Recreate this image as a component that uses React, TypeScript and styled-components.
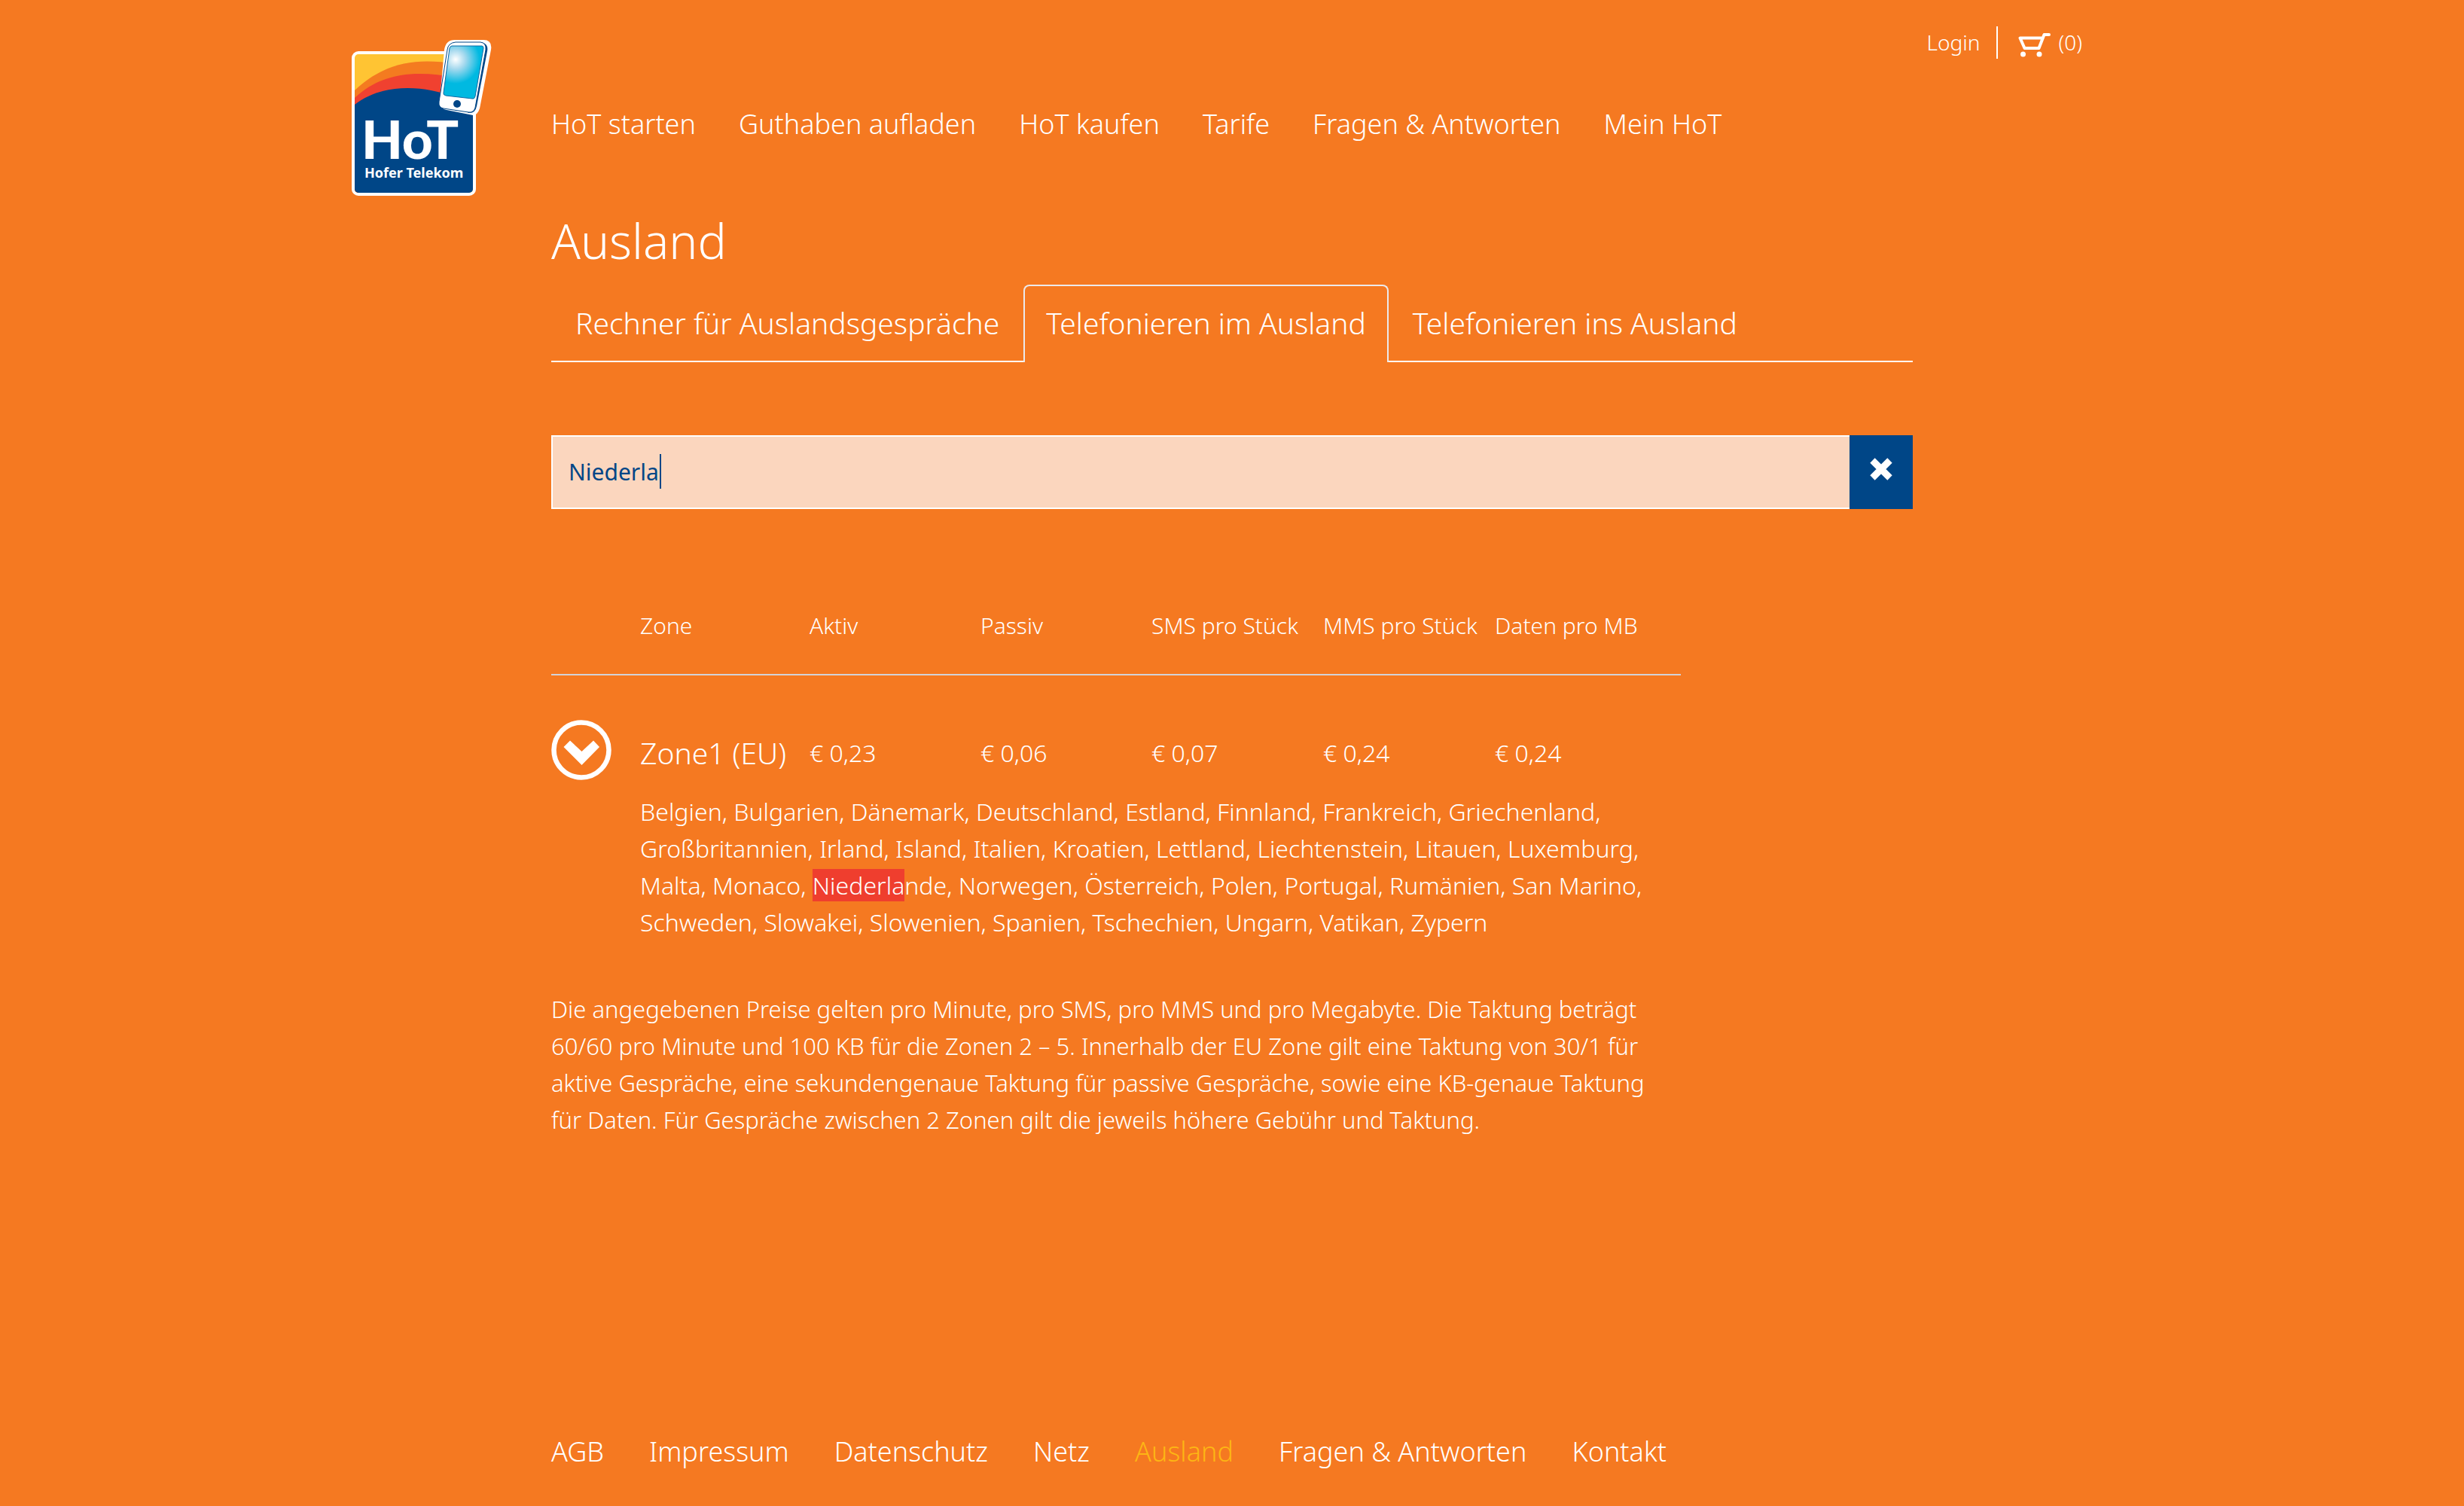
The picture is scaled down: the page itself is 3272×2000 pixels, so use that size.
import React, { useState } from "react";
import styled, { createGlobalStyle } from "styled-components";

const orange = "#f57921";
const navy = "#004687";
const red = "#ef3e2e";
const yellow = "#fdb614";

const GlobalStyle = createGlobalStyle`
  *, *::before, *::after { box-sizing: border-box; }
  body {
    margin: 0;
    background: ${orange};
    color: #fff;
    font-family: "Noto Sans", "Open Sans", sans-serif;
    font-weight: 300;
  }
`;

const Shell = styled.div`
  display: grid;
  grid-template-columns: 265px minmax(0, 1fr);
  max-width: 2338px;
  min-height: 100vh;
  margin: 0 auto;
`;

const LogoLink = styled.a`
  display: block;
  align-self: start;
  padding-top: 52px;

  svg {
    display: block;
    width: 186px;
    height: 210px;
  }
`;

const Column = styled.div`
  display: flex;
  flex-direction: column;
`;

const Utility = styled.div`
  display: flex;
  justify-content: flex-end;
  align-items: center;
  height: 43px;
  margin-top: 35px;
  padding-right: 40px;
  font-size: 28px;
  line-height: 43px;
`;

const UtilityLink = styled.a`
  display: flex;
  align-items: center;
  gap: 10px;
  color: inherit;
  text-decoration: none;

  svg {
    margin-top: 6px;
  }
`;

const Divider = styled.span`
  width: 2px;
  height: 43px;
  margin: 0 27px 0 22px;
  background: #fff;
`;

const LinkBar = styled.nav<{ $gap: number }>`
  display: flex;
  flex-wrap: wrap;
  column-gap: ${(p) => p.$gap}px;
  font-size: 36px;
  line-height: 48px;
`;

const MainNav = styled(LinkBar)`
  margin-top: 63px;
`;

const FooterNav = styled(LinkBar)`
  padding-bottom: 48px;
`;

const NavLink = styled.a<{ $current?: boolean }>`
  color: ${(p) => (p.$current ? yellow : "inherit")};
  text-decoration: none;
`;

const Main = styled.main`
  flex: 1;
  max-width: 1808px;
  padding-bottom: 96px;
`;

const Title = styled.h1`
  margin: 91px 0 18px;
  font-size: 64px;
  font-weight: 300;
  line-height: 80px;
`;

const Tabs = styled.div`
  display: flex;

  &::after {
    content: "";
    flex: 1;
    border-bottom: 2px solid #fff;
  }
`;

const Tab = styled.button<{ $active: boolean }>`
  padding: 27px 32px 26px;
  border: 0;
  border-bottom: 2px solid #fff;
  border-radius: 0;
  background: none;
  color: inherit;
  font: inherit;
  font-size: 39px;
  line-height: 48px;
  cursor: pointer;
  ${(p) =>
    p.$active &&
    `
    padding: 25px 28px 28px;
    border: 2px solid #ece9ea;
    border-bottom: 0;
    border-radius: 8px 8px 0 0;
  `}
`;

const Search = styled.form`
  display: flex;
  position: relative;
  height: 98px;
  margin-top: 97px;
`;

const SearchInput = styled.input`
  flex: 1;
  min-width: 0;
  padding: 0 21px 2px;
  border: 2px solid #fff;
  border-right: 0;
  border-radius: 0;
  outline: 0;
  background: #fbd6be;
  color: ${navy};
  font: inherit;
  font-size: 30px;
  font-weight: 400;
  caret-color: transparent;
`;

const Caret = styled.span`
  position: absolute;
  top: 25px;
  left: 144px;
  width: 2px;
  height: 46px;
  background: ${navy};
`;

const ClearButton = styled.button`
  display: flex;
  justify-content: center;
  align-items: center;
  width: 84px;
  padding: 0 0 8px;
  border: 0;
  background: ${navy};
  cursor: pointer;
`;

const Rates = styled.table`
  width: 100%;
  max-width: 1500px;
  margin-top: 131px;
  border-spacing: 0;
  table-layout: fixed;
  text-align: left;
  white-space: nowrap;
`;

const Col = styled.col<{ $width?: number }>`
  width: ${(p) => (p.$width ? `${p.$width}px` : "auto")};
`;

const HeadCell = styled.th`
  padding: 0 0 40px;
  border-bottom: 2px solid #d2d2d8;
  font-size: 30px;
  font-weight: 300;
  line-height: 48px;
`;

const IconCell = styled.td`
  padding: 59px 0 0;
`;

const ZoneName = styled.th`
  padding: 67px 0 0;
  font-size: 39px;
  font-weight: 300;
  line-height: 48px;
`;

const Price = styled.td`
  padding: 67px 0 0;
  font-size: 32px;
  line-height: 48px;
`;

const Toggle = styled.button`
  display: block;
  width: 80px;
  height: 80px;
  padding: 0;
  border: 0;
  background: none;
  cursor: pointer;
`;

const Countries = styled.td`
  padding: 17px 0 0;
  font-size: 32px;
  line-height: 49px;
  white-space: normal;
`;

const Mark = styled.mark`
  background: ${red};
  color: inherit;
`;

const Note = styled.p`
  max-width: 1484px;
  margin: 67px 0 0;
  font-size: 31px;
  line-height: 49px;
`;

function Logo() {
  return (
    <svg viewBox="0 0 186 210" role="img" aria-label="HoT Hofer Telekom">
      <defs>
        <clipPath id="card">
          <rect x="4" y="20" width="157" height="184" rx="5" />
        </clipPath>
        <radialGradient id="screen" gradientUnits="userSpaceOnUse" cx="138" cy="27" r="32">
          <stop offset="0" stopColor="#fff" />
          <stop offset="0.4" stopColor="#a6d9ee" />
          <stop offset="1" stopColor="#00b9e1" />
        </radialGradient>
      </defs>
      <rect x="0" y="16" width="165" height="192" rx="9" fill="#fff" />
      <g clipPath="url(#card)">
        <rect x="4" y="20" width="158" height="185" fill="#ffc433" />
        <path d="M4 68C42 32 84 24 138 33V205H4Z" fill="#f47b20" />
        <path d="M4 78C40 44 86 41 138 51V205H4Z" fill="#f04130" />
        <path d="M4 87C40 59 92 60 138 77H162V205H4Z" fill={navy} />
      </g>
      <path
        d="M137 1H175Q187 1 185 14L170 92Q167 101 161 101L126 94Q116 92 117 81L123 14Q125 1 137 1Z"
        fill="#fff"
      />
      <path d="M172 4Q182 6 180 16L166 89Q164 99 155 98L150 94Z" fill={navy} />
      <path
        d="M138 4H171Q179 5 178 14L164 91Q162 98 155 97L122 92Q115 91 116 83L127 14Q128 5 138 4Z"
        fill="#fff"
        stroke={navy}
        strokeWidth="1"
      />
      <path
        d="M133 9H173Q175 9 175 12L164 76Q163 80 160 79L125 75Q121 74 122 71L130 12Q131 9 133 9Z"
        fill="url(#screen)"
        stroke="#0d6aa6"
        strokeWidth="1"
      />
      <circle cx="140" cy="86" r="5" fill={navy} />
      <g fill="#fff">
        <text x="13" y="159" fontFamily="Lato, sans-serif" fontSize="71" fontWeight="900">HoT</text>
        <text x="17" y="184" fontFamily='"Noto Sans", sans-serif' fontSize="18" fontWeight="700">Hofer Telekom</text>
      </g>
    </svg>
  );
}

function CartIcon() {
  return (
    <svg width="43" height="33" viewBox="0 0 43 33" aria-hidden="true">
      <path
        d="M41 3H34.500L27.500 21H8.500L2.500 7.500H32"
        fill="none"
        stroke="#fff"
        strokeWidth="4"
        strokeLinecap="round"
        strokeLinejoin="round"
      />
      <circle cx="6.500" cy="29" r="3.500" fill="#fff" />
      <circle cx="28" cy="29" r="3.500" fill="#fff" />
    </svg>
  );
}

const mainLinks = ["HoT starten", "Guthaben aufladen", "HoT kaufen", "Tarife", "Fragen & Antworten", "Mein HoT"];
const footerLinks = ["AGB", "Impressum", "Datenschutz", "Netz", "Ausland", "Fragen & Antworten", "Kontakt"];
const tabs = ["Rechner für Auslandsgespräche", "Telefonieren im Ausland", "Telefonieren ins Ausland"];
const headings = ["Zone", "Aktiv", "Passiv", "SMS pro Stück", "MMS pro Stück", "Daten pro MB"];
const prices = ["€ 0,23", "€ 0,06", "€ 0,07", "€ 0,24", "€ 0,24"];
const countries =
  "Belgien, Bulgarien, Dänemark, Deutschland, Estland, Finnland, Frankreich, Griechenland, Großbritannien, Irland, Island, Italien, Kroatien, Lettland, Liechtenstein, Litauen, Luxemburg, Malta, Monaco, Niederlande, Norwegen, Österreich, Polen, Portugal, Rumänien, San Marino, Schweden, Slowakei, Slowenien, Spanien, Tschechien, Ungarn, Vatikan, Zypern";

function Highlighted({ text, query }: { text: string; query: string }) {
  const at = query ? text.indexOf(query) : -1;
  if (at < 0) return <>{text}</>;
  return (
    <>
      {text.slice(0, at)}
      <Mark>{query}</Mark>
      {text.slice(at + query.length)}
    </>
  );
}

export default function App() {
  const [query, setQuery] = useState("Niederla");
  const [active, setActive] = useState(1);
  const [open, setOpen] = useState(true);

  return (
    <>
      <GlobalStyle />
      <Shell>
        <LogoLink href="#home">
          <Logo />
        </LogoLink>
        <Column>
          <header>
            <Utility>
              <UtilityLink href="#login">Login</UtilityLink>
              <Divider />
              <UtilityLink href="#cart" aria-label="Warenkorb">
                <CartIcon />
                (0)
              </UtilityLink>
            </Utility>
            <MainNav $gap={57}>
              {mainLinks.map((label) => (
                <NavLink key={label} href="#nav">{label}</NavLink>
              ))}
            </MainNav>
          </header>
          <Main>
            <Title>Ausland</Title>
            <Tabs role="tablist">
              {tabs.map((label, i) => (
                <Tab key={label} type="button" role="tab" aria-selected={i === active} $active={i === active} onClick={() => setActive(i)}>
                  {label}
                </Tab>
              ))}
            </Tabs>
            <Search onSubmit={(e) => e.preventDefault()}>
              <SearchInput aria-label="Land suchen" value={query} onChange={(e) => setQuery(e.target.value)} />
              {query === "Niederla" && <Caret />}
              <ClearButton type="button" aria-label="Eingabe löschen" onClick={() => setQuery("")}>
                <svg width="30" height="30" viewBox="0 0 30 30" aria-hidden="true">
                  <path d="M3.500 3.500L26.500 26.500M26.500 3.500L3.500 26.500" stroke="#fff" strokeWidth="9" />
                </svg>
              </ClearButton>
            </Search>
            <Rates>
              <colgroup>
                <Col $width={118} />
                <Col $width={225} />
                <Col $width={227} />
                <Col $width={227} />
                <Col $width={228} />
                <Col $width={228} />
                <Col />
              </colgroup>
              <thead>
                <tr>
                  <HeadCell as="td" />
                  {headings.map((label) => (
                    <HeadCell key={label} scope="col">{label}</HeadCell>
                  ))}
                </tr>
              </thead>
              <tbody>
                <tr>
                  <IconCell>
                    <Toggle type="button" aria-label="Länder anzeigen" aria-expanded={open} onClick={() => setOpen(!open)}>
                      <svg width="80" height="80" viewBox="0 0 80 80" aria-hidden="true">
                        <circle cx="40" cy="40" r="36.500" fill="none" stroke="#fff" strokeWidth="6.500" />
                        <path d="M16.500 36L25 27.500L40.500 42L56 27.500L64 36L40.500 60Z" fill="#fff" />
                      </svg>
                    </Toggle>
                  </IconCell>
                  <ZoneName scope="row">Zone1 (EU)</ZoneName>
                  {prices.map((price, i) => (
                    <Price key={headings[i + 1]}>{price}</Price>
                  ))}
                </tr>
                {open && (
                  <tr>
                    <td />
                    <Countries colSpan={6}>
                      <Highlighted text={countries} query={query} />
                    </Countries>
                  </tr>
                )}
              </tbody>
            </Rates>
            <Note>
              Die angegebenen Preise gelten pro Minute, pro SMS, pro MMS und pro Megabyte. Die Taktung beträgt 60/60 pro
              Minute und 100 KB für die Zonen 2 – 5. Innerhalb der EU Zone gilt eine Taktung von 30/1 für aktive
              Gespräche, eine sekundengenaue Taktung für passive Gespräche, sowie eine KB-genaue Taktung für Daten. Für
              Gespräche zwischen 2 Zonen gilt die jeweils höhere Gebühr und Taktung.
            </Note>
          </Main>
          <footer>
            <FooterNav $gap={60}>
              {footerLinks.map((label) => (
                <NavLink key={label} href="#footer" $current={label === "Ausland"}>{label}</NavLink>
              ))}
            </FooterNav>
          </footer>
        </Column>
      </Shell>
    </>
  );
}
